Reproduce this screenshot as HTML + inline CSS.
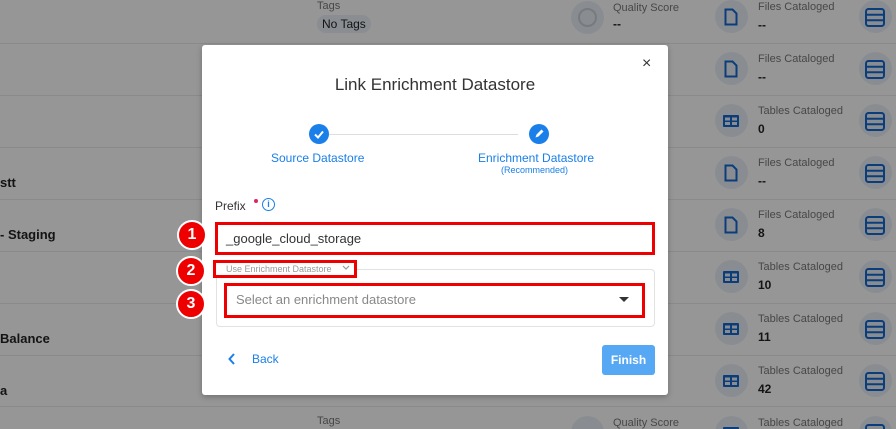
<!DOCTYPE html>
<html><head><style>
*{margin:0;padding:0;box-sizing:border-box}
html,body{width:896px;height:429px;overflow:hidden;background:#fafafa}
body{font-family:"Liberation Sans",sans-serif;position:relative}
.a{position:absolute}
.sep{position:absolute;left:0;width:896px;height:1px;background:#e6e6e6}
.lbl{position:absolute;font-size:11px;color:#777}
.val{position:absolute;font-size:12px;color:#222;font-weight:bold}
.circ{position:absolute;width:33px;height:33px;border-radius:50%;background:#e4ebf3}
.num{position:absolute;border-radius:50%;background:#e00;color:#fff;font-weight:bold;font-size:16px;text-align:center;border:2px solid #fff;width:30px;height:30px;line-height:26px}
.red{position:absolute;border:3px solid #e00}
#ov{position:absolute;left:0;top:0;width:896px;height:429px;background:rgba(0,0,0,0.4)}
</style></head><body>
<div class="sep" style="top:43px"></div><div class="sep" style="top:95px"></div><div class="sep" style="top:147px"></div><div class="sep" style="top:199px"></div><div class="sep" style="top:251px"></div><div class="sep" style="top:303px"></div><div class="sep" style="top:355px"></div><div class="sep" style="top:406px"></div>

<div class="lbl" style="left:317px;top:0px">Tags</div>
<div class="a" style="left:317px;top:15px;background:#e6ecf2;border-radius:9px;padding:2px 5px;font-size:12px;color:#222">No Tags</div>
<div class="circ" style="left:571px;top:1px"></div><div class="a" style="left:578px;top:8px;width:19px;height:19px;border-radius:50%;border:2px solid #c8ccd0"></div>
<div class="lbl" style="left:613px;top:2px">Quality Score</div><div class="val" style="left:613px;top:17px">--</div>
<div class="lbl" style="left:317px;top:415px">Tags</div>
<div class="circ" style="left:571px;top:416px"></div>
<div class="lbl" style="left:613px;top:417px">Quality Score</div>

<div class="val" style="left:0;top:175px;font-size:13px">stt</div>
<div class="val" style="left:0;top:227px;font-size:13px">- Staging</div>
<div class="val" style="left:0;top:331px;font-size:13px">Balance</div>
<div class="val" style="left:0;top:383px;font-size:13px">a</div>

<div id="rows"></div>
<script>
var d=[["F","Files Cataloged","--"],["F","Files Cataloged","--"],["T","Tables Cataloged","0"],["F","Files Cataloged","--"],["F","Files Cataloged","8"],["T","Tables Cataloged","10"],["T","Tables Cataloged","11"],["T","Tables Cataloged","42"],["T","Tables Cataloged",""]];
var h="";
d.forEach(function(r,k){var c=17+52*k;
h+='<div class="circ" style="left:715px;top:'+(c-17)+'px"></div>';
if(r[0]=="F")h+='<svg class="a" style="left:724px;top:'+(c-9)+'px" width="14" height="18" viewBox="0 0 14 18"><path d="M1.5 1.5h7l4 4v11h-11z" fill="none" stroke="#1166cc" stroke-width="2"/></svg>';
else h+='<svg class="a" style="left:723px;top:'+(c-6)+'px" width="16" height="12" viewBox="0 0 16 12"><rect width="16" height="12" rx="1" fill="#1166cc"/><rect x="2" y="2.5" width="5" height="3" fill="#e4ebf3"/><rect x="9" y="2.5" width="5" height="3" fill="#e4ebf3"/><rect x="2" y="7" width="5" height="3" fill="#e4ebf3"/><rect x="9" y="7" width="5" height="3" fill="#e4ebf3"/></svg>';
h+='<div class="lbl" style="left:758px;top:'+(c-16)+'px">'+r[1]+'</div><div class="val" style="left:758px;top:'+(c+1)+'px">'+r[2]+'</div>';
h+='<div class="circ" style="left:859px;top:'+(c-17)+'px"></div><svg class="a" style="left:865px;top:'+(c-9)+'px" width="20" height="19" viewBox="0 0 20 19"><rect x="1" y="1" width="18" height="17" rx="2.5" fill="none" stroke="#1166cc" stroke-width="2"/><path d="M1 6.7h18M1 12.3h18" stroke="#1166cc" stroke-width="2"/></svg>';
});
document.getElementById("rows").innerHTML=h;
</script>
<div id="ov"></div>

<div class="a" style="left:202px;top:45px;width:466px;height:350px;background:#fff;border-radius:3px;box-shadow:0 2px 6px rgba(0,0,0,.25)"></div>
<div class="a" style="left:642px;top:55px;font-size:16px;color:#333">×</div>
<div class="a" style="left:202px;top:75px;width:466px;text-align:center;font-size:17px;color:#333">Link Enrichment Datastore</div>
<div class="a" style="left:329px;top:134px;width:189px;height:1px;background:#ddd"></div>
<div class="a" style="left:309px;top:124px;width:20px;height:20px;border-radius:50%;background:#1a7fe8"></div>
<svg class="a" style="left:309px;top:124px" width="20" height="20"><path d="M6 10.5l3 3 5-6" fill="none" stroke="#fff" stroke-width="2"/></svg>
<div class="a" style="left:529px;top:124px;width:20px;height:20px;border-radius:50%;background:#1a7fe8"></div>
<svg class="a" style="left:529px;top:124px" width="20" height="20"><path d="M6.5 13.5l1-3 5-5 2 2-5 5z" fill="#fff"/></svg>
<div class="a" style="left:271px;top:151px;font-size:12px;color:#1a7fe8">Source Datastore</div>
<div class="a" style="left:478px;top:151px;font-size:12px;color:#1a7fe8">Enrichment Datastore</div>
<div class="a" style="left:501px;top:165px;font-size:9px;color:#1a7fe8">(Recommended)</div>
<div class="a" style="left:215px;top:199px;font-size:12px;color:#333">Prefix</div>
<div class="a" style="left:254px;top:199px;width:4px;height:4px;border-radius:50%;background:#e0245e"></div>
<div class="a" style="left:262px;top:198px;width:13px;height:13px;border-radius:50%;border:1.5px solid #1a7fe8;color:#1a7fe8;font-size:9px;text-align:center;line-height:10px;font-weight:bold">i</div>
<div class="red" style="left:215px;top:222px;width:440px;height:33px"></div>
<div class="a" style="left:226px;top:231px;font-size:13px;color:#333">_google_cloud_storage</div>
<div class="a" style="left:216px;top:269px;width:439px;height:58px;border:1px solid #e2e2e2;border-radius:4px"></div>
<div class="a" style="left:213px;top:260px;width:144px;height:18px;background:#fff;border:3px solid #e00"></div>
<div class="a" style="left:226px;top:264px;font-size:9px;color:#999">Use Enrichment Datastore</div>
<svg class="a" style="left:342px;top:265px" width="8" height="6"><path d="M1 1l3 3 3-3" fill="none" stroke="#999" stroke-width="1.2"/></svg>
<div class="red" style="left:224px;top:283px;width:421px;height:35px"></div>
<div class="a" style="left:236px;top:292px;font-size:13px;color:#888">Select an enrichment datastore</div>
<svg class="a" style="left:619px;top:297px" width="10" height="6"><path d="M0 0h10L5 5z" fill="#333"/></svg>
<div class="num" style="left:177px;top:220px">1</div>
<div class="num" style="left:176px;top:256px">2</div>
<div class="num" style="left:176px;top:289px">3</div>
<svg class="a" style="left:228px;top:353px" width="8" height="12"><path d="M6 1L1.5 6 6 11" fill="none" stroke="#1a7fe8" stroke-width="2"/></svg>
<div class="a" style="left:252px;top:352px;font-size:12px;color:#1a7fe8">Back</div>
<div class="a" style="left:602px;top:345px;width:53px;height:30px;background:#56a8f4;border-radius:3px;color:#fff;font-size:12px;font-weight:bold;text-align:center;line-height:30px">Finish</div>
</body></html>
